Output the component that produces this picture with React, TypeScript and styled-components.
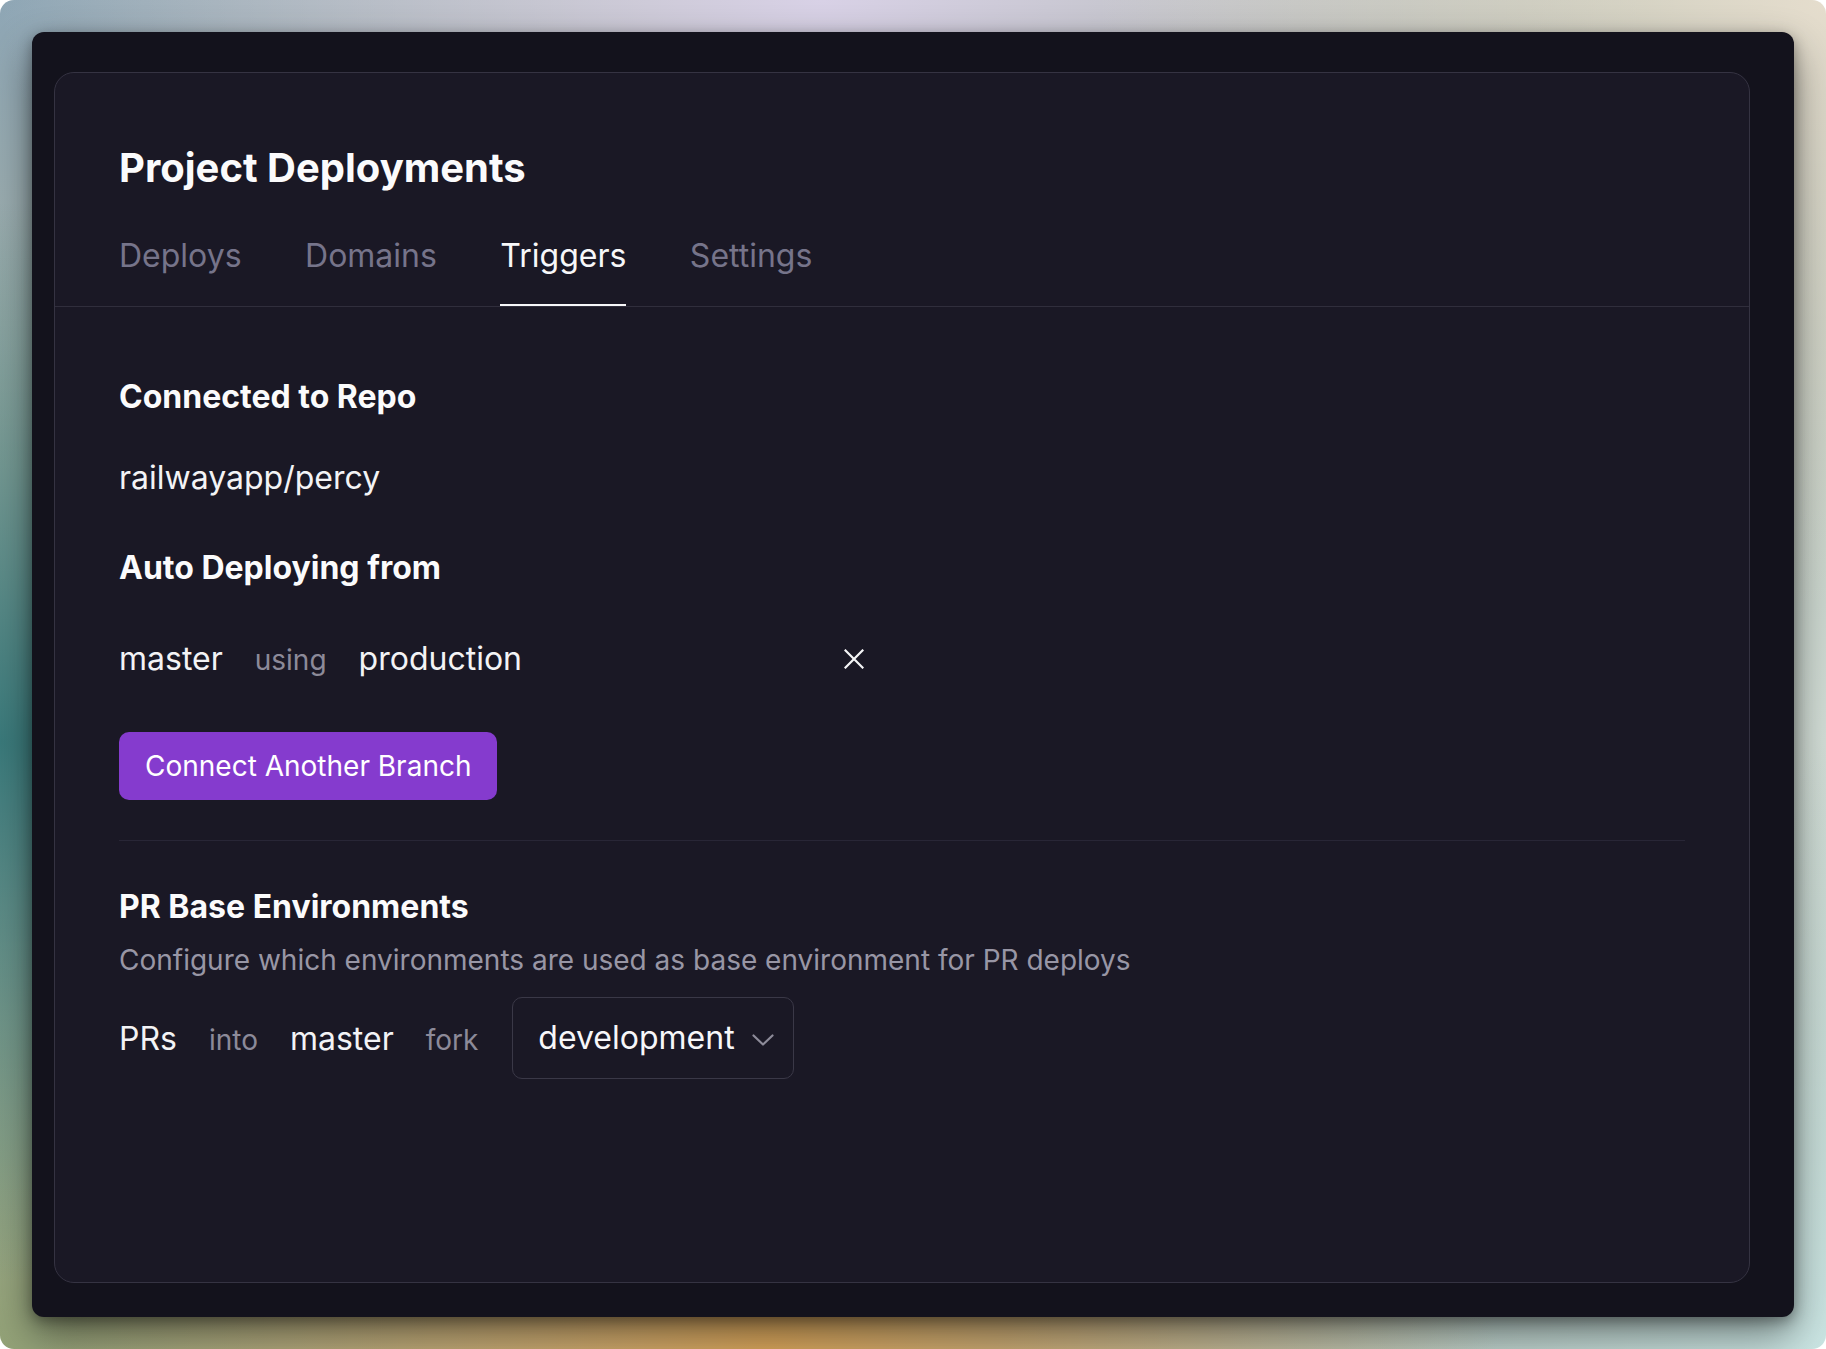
import React from "react";
import styled, { createGlobalStyle } from "styled-components";

const GlobalStyle = createGlobalStyle`
  html, body {
    margin: 0;
    padding: 0;
    background: #ffffff;
  }
  body {
    font-family: Inter, "Noto Sans", "Liberation Sans", sans-serif;
    -webkit-font-smoothing: antialiased;
  }
  * { box-sizing: border-box; }
`;

const Backdrop = styled.div`
  width: 1826px;
  height: 1349px;
  padding: 32px;
  display: flex;
  border-radius: 14px;
  overflow: hidden;
  background-color: #a9b4a8;
  background-image:
    radial-gradient(ellipse 45% 40% at 0% 55%, #3a7a7b 0%, rgba(58, 122, 123, 0) 100%),
    radial-gradient(ellipse 40% 35% at 42% 100%, #dba75c 0%, rgba(219, 167, 92, 0) 100%),
    radial-gradient(ellipse 35% 40% at 0% 100%, #93a277 0%, rgba(147, 162, 119, 0) 100%),
    radial-gradient(ellipse 45% 45% at 100% 100%, #cae5e3 0%, rgba(202, 229, 227, 0) 100%),
    radial-gradient(ellipse 40% 45% at 100% 0%, #e5ddcd 0%, rgba(229, 221, 205, 0) 100%),
    radial-gradient(ellipse 45% 35% at 45% 0%, #d8d1e6 0%, rgba(216, 209, 230, 0) 100%),
    radial-gradient(ellipse 35% 35% at 0% 0%, #8ea6b5 0%, rgba(142, 166, 181, 0) 100%),
    radial-gradient(ellipse 40% 60% at 100% 55%, #d2ddd6 0%, rgba(210, 221, 214, 0) 100%);
`;

const Window = styled.div`
  flex: 1;
  display: flex;
  padding: 40px 44px 34px 22px;
  background: #13121c;
  border-radius: 12px;
  box-shadow: 0 18px 40px rgba(0, 0, 0, 0.45), 0 4px 14px rgba(0, 0, 0, 0.35);
`;

const Panel = styled.section`
  flex: 1;
  display: flex;
  flex-direction: column;
  background: #1a1825;
  border: 1px solid #353342;
  border-radius: 20px;
`;

const Header = styled.header`
  padding-top: 71px;
  display: flex;
  flex-direction: column;
`;

const Title = styled.h1`
  margin: 0;
  padding: 0 64px;
  font-size: 40px;
  line-height: 48px;
  font-weight: 700;
  color: #fbfbfc;
`;

const TabBar = styled.nav`
  margin-top: 44px;
  padding: 0 64px;
  display: flex;
  gap: 63.5px;
  border-bottom: 1px solid #302e3c;
`;

const Tab = styled.div<{ $active?: boolean }>`
  font-size: 32px;
  line-height: 39px;
  font-weight: 400;
  padding-bottom: 29px;
  color: ${(p) => (p.$active ? "#f7f7f9" : "#76748a")};
  border-bottom: 2px solid ${(p) => (p.$active ? "#f7f7f9" : "transparent")};
  cursor: pointer;
`;

const Body = styled.div`
  padding: 70px 64px 0;
  display: flex;
  flex-direction: column;
  align-items: flex-start;
`;

const SectionTitle = styled.h2<{ $mt?: number }>`
  margin: ${(p) => p.$mt ?? 0}px 0 0;
  font-size: 32px;
  line-height: 39px;
  font-weight: 700;
  color: #fbfbfc;
`;

const RepoName = styled.div`
  margin-top: 42px;
  font-size: 32px;
  line-height: 39px;
  color: #f3f3f5;
`;

const BranchRow = styled.div`
  margin-top: 52px;
  width: 745px;
  display: flex;
  align-items: center;
  justify-content: space-between;
`;

const InlineGroup = styled.div`
  display: flex;
  align-items: baseline;
  gap: 32px;
`;

const Value = styled.span`
  font-size: 32px;
  line-height: 39px;
  color: #f3f3f5;
`;

const Connector = styled.span`
  font-size: 28px;
  line-height: 34px;
  color: #8c8a99;
`;

const IconButton = styled.button`
  width: 20px;
  height: 20px;
  padding: 0;
  border: none;
  background: none;
  color: #f5f5f7;
  display: flex;
  align-items: center;
  justify-content: center;
  cursor: pointer;
`;

const PrimaryButton = styled.button`
  margin-top: 54px;
  padding: 17px 26px;
  border: none;
  border-radius: 10px;
  background: #853bce;
  color: #ffffff;
  font-family: inherit;
  font-size: 28px;
  line-height: 34px;
  font-weight: 400;
  cursor: pointer;
`;

const Separator = styled.hr`
  margin: 40px 0 0;
  width: 100%;
  height: 1px;
  border: none;
  background: #282636;
`;

const Description = styled.p`
  margin: 17px 0 0;
  font-size: 28px;
  line-height: 34px;
  color: #9896a5;
`;

const PrRow = styled.div`
  margin-top: 20px;
  display: flex;
  align-items: center;
  gap: 34px;
`;

const PrGroup = styled.div`
  display: flex;
  align-items: baseline;
  gap: 32px;
`;

const Select = styled.button`
  display: flex;
  align-items: center;
  gap: 17px;
  padding: 20px 19px 21px 25px;
  background: transparent;
  border: 1px solid #3a3847;
  border-radius: 10px;
  color: #f7f7f9;
  font-family: inherit;
  font-size: 32px;
  line-height: 39px;
  cursor: pointer;
`;

const ChevronWrap = styled.span`
  display: flex;
  color: #8d8b99;
  margin-top: 4px;
`;

export default function App() {
  return (
    <>
      <GlobalStyle />
      <Backdrop>
        <Window>
          <Panel>
            <Header>
              <Title>Project Deployments</Title>
              <TabBar>
                <Tab>Deploys</Tab>
                <Tab>Domains</Tab>
                <Tab $active>Triggers</Tab>
                <Tab>Settings</Tab>
              </TabBar>
            </Header>
            <Body>
              <SectionTitle>Connected to Repo</SectionTitle>
              <RepoName>railwayapp/percy</RepoName>
              <SectionTitle $mt={51}>Auto Deploying from</SectionTitle>
              <BranchRow>
                <InlineGroup>
                  <Value>master</Value>
                  <Connector>using</Connector>
                  <Value>production</Value>
                </InlineGroup>
                <IconButton aria-label="Remove">
                  <svg width="20" height="20" viewBox="0 0 20 20" fill="none">
                    <path
                      d="M1.5 1.5L18.5 18.5M18.5 1.5L1.5 18.5"
                      stroke="currentColor"
                      strokeWidth="2.2"
                      strokeLinecap="square"
                    />
                  </svg>
                </IconButton>
              </BranchRow>
              <PrimaryButton>Connect Another Branch</PrimaryButton>
              <Separator />
              <SectionTitle $mt={46}>PR Base Environments</SectionTitle>
              <Description>
                Configure which environments are used as base environment for PR deploys
              </Description>
              <PrRow>
                <PrGroup>
                  <Value>PRs</Value>
                  <Connector>into</Connector>
                  <Value>master</Value>
                  <Connector>fork</Connector>
                </PrGroup>
                <Select>
                  <span>development</span>
                  <ChevronWrap>
                    <svg width="22" height="12" viewBox="0 0 22 12" fill="none">
                      <path
                        d="M1.5 1.5L11 10.5L20.5 1.5"
                        stroke="currentColor"
                        strokeWidth="2.2"
                        strokeLinecap="round"
                        strokeLinejoin="round"
                      />
                    </svg>
                  </ChevronWrap>
                </Select>
              </PrRow>
            </Body>
          </Panel>
        </Window>
      </Backdrop>
    </>
  );
}
